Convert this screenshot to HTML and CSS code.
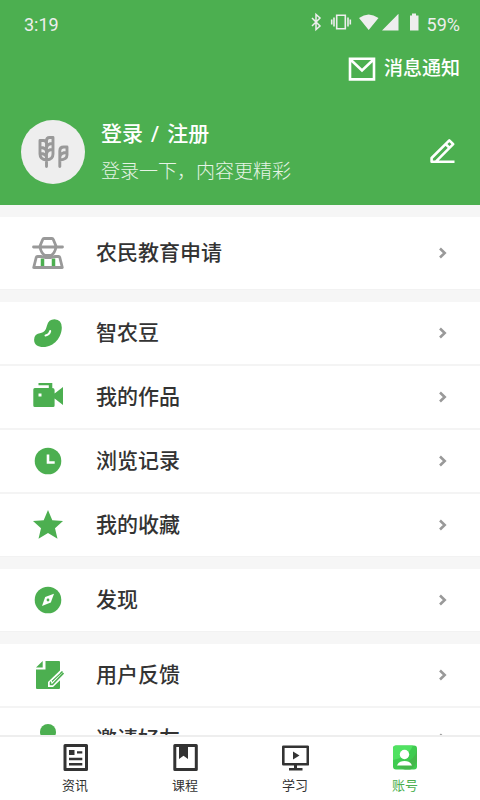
FILE: index.html
```html
<!DOCTYPE html>
<html lang="zh-CN">
<head>
<meta charset="utf-8">
<meta name="viewport" content="width=device-width, initial-scale=1">
<title>账号</title>
<link rel="stylesheet" href="styles.css">
</head>
<body>
<header class="header">
  <div class="status">
    <span>3:19</span>
    <div class="status-right">
      <svg class="status-icons" viewBox="308 10 114 24" aria-hidden="true">
        <path d="M312 18l8 8-4 3.500V14.500l4 3.500-8 8" fill="none" stroke="#eee" stroke-width="1.500"/>
        <path d="M336.700 15.200h8.600v13.600h-8.600zM334 17.500v9M331.700 19.500v5M348 17.500v9M350.300 19.500v5" fill="none" stroke="#eee" stroke-width="1.600"/>
        <path d="M359 18q9.500-7 19.500 0L368.700 30zM382 30.500h16.500V13.800zM410 15.500h2V13.500h4v2h2.500v15H410z" fill="#eee"/>
      </svg>
      <span>59%</span>
    </div>
  </div>
  <a class="messages" href="#messages">
    <svg class="mail" viewBox="0 0 28 24" aria-hidden="true"><path d="M2 1.800h24v20.600H2zM3 3l11 10.500L25 3" fill="none" stroke="#fff" stroke-width="2.600"/></svg>
    <span>消息通知</span>
  </a>
  <div class="profile">
    <svg class="avatar" viewBox="21 120 64 64" aria-hidden="true">
      <circle cx="53" cy="152" r="32" fill="#eee"/>
      <path d="M46.500 166.500V160M46.500 160q-6.500-.5-6.500-6v-13.500h3.500q3 0 3 3M46.500 160q6.500-.5 6.500-6v-16.500h-3.500q-3 0-3 3.500v19M40 147.500q6 0 6.500 4M40 153.500q6 0 6.500 4M53 143.500q-6 0-6.500 4.500M53 149.500q-6 0-6.500 4.500M59.800 166.500v-15.500q0-4 4-4h3.200v8q0 4.500-7.200 5M67 152.500q-6.500 0-7.200 4.500" fill="none" stroke="#999" stroke-width="2.900" stroke-linecap="round" stroke-linejoin="round"/>
    </svg>
    <div class="profile-text">
      <a class="login" href="#login"><span>登录</span> <span>/</span> <span>注册</span></a>
      <p class="hint">登录一下，内容更精彩</p>
    </div>
    <button class="edit" type="button" aria-label="编辑">
      <svg viewBox="429 139 28 28" aria-hidden="true"><path d="M454.500 162.800H431.600V159L449.300 141.300L453.200 145.200L435.600 162.800M445.600 145l3.900 3.900" fill="none" stroke="#fff" stroke-width="2.600" stroke-linejoin="round"/></svg>
    </button>
  </div>
</header>
<main class="content">
  <nav class="group tall">
    <a class="row" href="#apply">
      <svg class="icon" viewBox="32 237 32 32" aria-hidden="true">
        <path d="M42.500 258.500v8M53.500 258.500v8" stroke="#4caf50" stroke-width="3.500"/>
        <path d="M33.500 247h29M40 246l2.700-6.500q.4-1 1.300-1h8q.9 0 1.300 1L56 246M40 247.500q1.500 6 5 8h6q3.500-2 5-8M41 256.500h-3.500q-1 0-1.300 1l-2.500 10h28.600l-2.500-10q-.3-1-1.300-1H55M41 256.500l4 1h6l4-1" fill="none" stroke="#999" stroke-width="2.800" stroke-linejoin="round" stroke-linecap="round"/>
      </svg>
      <span class="label">农民教育申请</span>
      <svg class="chevron" viewBox="0 0 8 12" aria-hidden="true"><path d="M1 1.500L5.700 6 1 10.500"/></svg>
    </a>
  </nav>
  <nav class="group">
    <a class="row" href="#beans">
      <svg class="icon" viewBox="32 317 32 32" aria-hidden="true"><path d="M47 325.500q1.500-6.200 7.500-6.200 7.300.5 7.300 8.300c0 9.500-7.500 19.500-18.500 19.500-5.500 0-9.200-2.500-9.200-7.300q0-6.200 6.700-6.800 4.700-.6 6.200-7.500z" fill="#4caf50"/><path d="M45.500 335.500q4-.8 4.700-4.500" fill="none" stroke="#fff" stroke-width="2" stroke-linecap="round"/></svg>
      <span class="label">智农豆</span>
      <svg class="chevron" viewBox="0 0 8 12" aria-hidden="true"><path d="M1 1.500L5.700 6 1 10.500"/></svg>
    </a>
    <a class="row" href="#works">
      <svg class="icon" viewBox="32 382 32 32" aria-hidden="true"><path d="M34.800 389h14v-2.800H38.500V384h13.800v5q2.300 0 2.300 2v3.500l8.400-6.500v18l-8.400-6.500v7q0 1.500-1.500 1.500H34.800q-1.500 0-1.500-1.500V390.500q0-1.500 1.500-1.500z" fill="#4caf50"/><path d="M38.500 394.500h3v3h-3z" fill="#fff"/></svg>
      <span class="label">我的作品</span>
      <svg class="chevron" viewBox="0 0 8 12" aria-hidden="true"><path d="M1 1.500L5.700 6 1 10.500"/></svg>
    </a>
    <a class="row" href="#history">
      <svg class="icon" viewBox="32 445 32 32" aria-hidden="true"><circle cx="48" cy="461" r="13.300" fill="#4caf50"/><path d="M48 454.500v8h6.700" fill="none" stroke="#fff" stroke-width="2.600"/></svg>
      <span class="label">浏览记录</span>
      <svg class="chevron" viewBox="0 0 8 12" aria-hidden="true"><path d="M1 1.500L5.700 6 1 10.500"/></svg>
    </a>
    <a class="row" href="#favorites">
      <svg class="icon" viewBox="32 509 32 32" aria-hidden="true"><path d="M48 510l4.300 10.300 10.700.8-8 7.200 2.500 10.500L48 533l-9.500 5.800 2.500-10.500-8-7.200 10.700-.8z" fill="#4caf50"/></svg>
      <span class="label">我的收藏</span>
      <svg class="chevron" viewBox="0 0 8 12" aria-hidden="true"><path d="M1 1.500L5.700 6 1 10.500"/></svg>
    </a>
  </nav>
  <nav class="group">
    <a class="row" href="#discover">
      <svg class="icon" viewBox="32 584 32 32" aria-hidden="true"><circle cx="48" cy="600" r="13.300" fill="#4caf50"/><path d="M54 593.800l-3.200 8.800-8.800 3.400 3.200-8.900z" fill="#fff"/><circle cx="48" cy="600" r="1.400" fill="#4caf50"/></svg>
      <span class="label">发现</span>
      <svg class="chevron" viewBox="0 0 8 12" aria-hidden="true"><path d="M1 1.500L5.700 6 1 10.500"/></svg>
    </a>
  </nav>
  <nav class="group">
    <a class="row" href="#feedback">
      <svg class="icon" viewBox="32 659 32 32" aria-hidden="true"><path d="M36 667.500l6.700-6.500v6.500zM45.500 661H59q1 0 1 1v26q0 1-1 1H37q-1 0-1-1v-18.500h9.500z" fill="#4caf50"/><path d="M61.500 669L48 682v5h5L64.500 676z" fill="#fff"/><path d="M62.500 671.500L50.500 682.500v2h2L63.500 673" fill="none" stroke="#4caf50" stroke-width="1.600"/><path d="M60 672.500l-8.500 8v2" fill="none" stroke="#fff" stroke-width="1"/></svg>
      <span class="label">用户反馈</span>
      <svg class="chevron" viewBox="0 0 8 12" aria-hidden="true"><path d="M1 1.500L5.700 6 1 10.500"/></svg>
    </a>
    <a class="row" href="#invite">
      <svg class="icon" viewBox="32 723 32 32" aria-hidden="true"><circle cx="48" cy="732" r="8" fill="#4caf50"/><path d="M34 752q0-11 14-11t14 11z" fill="#4caf50"/></svg>
      <span class="label">邀请好友</span>
      <svg class="chevron" viewBox="0 0 8 12" aria-hidden="true"><path d="M1 1.500L5.700 6 1 10.500"/></svg>
    </a>
  </nav>
</main>
<nav class="tabs">
  <a class="tab" href="#news">
    <svg viewBox="61 743 28 28" aria-hidden="true"><path d="M65 745.500h21.500v24H65z" fill="none" stroke="#333" stroke-width="3" stroke-linejoin="round"/><path d="M69 750h5.500v5H69zM77 751.300h5.300v2.300H77zM69 757.800h13.300v2.400H69zM69 763h13.300v2.400H69z" fill="#333"/></svg>
    <span>资讯</span>
  </a>
  <a class="tab" href="#courses">
    <svg viewBox="171 743 28 28" aria-hidden="true"><path d="M174.800 745.500h21.500v24h-21.500z" fill="none" stroke="#333" stroke-width="3" stroke-linejoin="round"/><path d="M179 746h9v13l-4.500-3.300-4.500 3.300z" fill="#333"/></svg>
    <span>课程</span>
  </a>
  <a class="tab" href="#study">
    <svg viewBox="281 743 28 28" aria-hidden="true"><path d="M283.300 746.800h24.500v17.500h-24.500z" fill="none" stroke="#333" stroke-width="2.600" stroke-linejoin="round"/><path d="M293 751.500l6.500 4-6.500 4zM294 764h3v4h5.500v2.600H289V768h5z" fill="#333"/></svg>
    <span>学习</span>
  </a>
  <a class="tab active" href="#account" aria-current="page">
    <svg viewBox="391 743 28 28" aria-hidden="true">
      <defs><clipPath id="tile"><rect x="393" y="745.500" width="24" height="24" rx="3"/></clipPath></defs>
      <g clip-path="url(#tile)"><path d="M393 745h24v25h-24z" fill="#3fcb50"/><path d="M393 745h20q-4 12-20 15z" fill="#50e261"/><path d="M417 749q-1 12-20 17l8 4h5q5-3 7-9z" fill="#45b84b"/></g>
      <circle cx="404.500" cy="754.500" r="4.700" fill="#fff"/><path d="M397 765.500q1.500-4.500 7.500-4.500t7.500 4.500z" fill="#fff"/>
    </svg>
    <span>账号</span>
  </a>
</nav>
</body>
</html>
```
FILE: styles.css
```css
* {
  box-sizing: border-box;
}

body {
  margin: 0;
  height: 100vh;
  display: flex;
  flex-direction: column;
  overflow: hidden;
  background: #f6f6f6;
  color: #333;
  font-family: Roboto, "Noto Sans CJK SC", sans-serif;
}

a {
  color: inherit;
  text-decoration: none;
}

svg {
  display: block;
  flex: none;
}

.header {
  flex: none;
  background: #4caf50;
  color: #fff;
  padding-bottom: 17px;
}

.status {
  display: flex;
  justify-content: space-between;
  align-items: center;
  height: 48px;
  padding: 0 20px 0 24px;
  color: #eee;
  font-size: 18px;
}

.status-right {
  display: flex;
  align-items: center;
  gap: 5px;
}

.status-icons {
  width: 114px;
  height: 24px;
  margin-bottom: 4px;
}

.messages {
  display: flex;
  align-items: center;
  justify-content: flex-end;
  gap: 8px;
  height: 41px;
  padding-right: 20px;
  font-size: 19px;
  line-height: 24px;
  font-weight: 500;
}

.mail {
  width: 28px;
  height: 24px;
}

.profile {
  display: flex;
  align-items: center;
  margin-top: 27px;
  padding: 0 23px 0 21px;
}

.avatar {
  width: 64px;
  height: 64px;
}

.profile-text {
  flex: 1;
  margin-left: 16px;
  padding-top: 2px;
}

.login {
  display: flex;
  gap: 8px;
  font-size: 21px;
  line-height: 32px;
  font-weight: 500;
}

.hint {
  margin: 6px 0 0;
  font-size: 19px;
  line-height: 32px;
  font-weight: 300;
  color: #e6f4e6;
}

.edit {
  border: 0;
  padding: 0;
  background: none;
}

.edit svg {
  width: 28px;
  height: 28px;
}

.content {
  flex: 1;
  min-height: 0;
  overflow-y: auto;
  scrollbar-width: none;
  padding-top: 12px;
}

.group {
  margin-bottom: 12px;
  border-bottom: 1px solid #f2f2f2;
  background: #fff;
}

.row {
  display: flex;
  align-items: center;
  height: 62px;
  padding: 0 33px 0 32px;
}

.row + .row {
  height: 64px;
  border-top: 2px solid #f4f4f4;
}

.tall .row {
  height: 72px;
}

.icon {
  width: 32px;
  height: 32px;
}

.label {
  flex: 1;
  margin-left: 32px;
  font-size: 21px;
  line-height: 32px;
  font-weight: 500;
}

.chevron {
  width: 8px;
  height: 12px;
  fill: none;
  stroke: #999;
  stroke-width: 2.6;
}

.tabs {
  flex: none;
  display: flex;
  justify-content: space-between;
  height: 65px;
  padding: 0 20px;
  border-top: 2px solid #eee;
  background: #fff;
}

.tab {
  flex: 1;
  display: flex;
  flex-direction: column;
  align-items: center;
  padding-top: 6px;
  font-size: 13px;
  line-height: 20px;
  font-weight: 400;
}

.tab svg {
  width: 28px;
  height: 28px;
}

.tab span {
  margin-top: 5px;
}

.active {
  color: #4caf50;
}
```
